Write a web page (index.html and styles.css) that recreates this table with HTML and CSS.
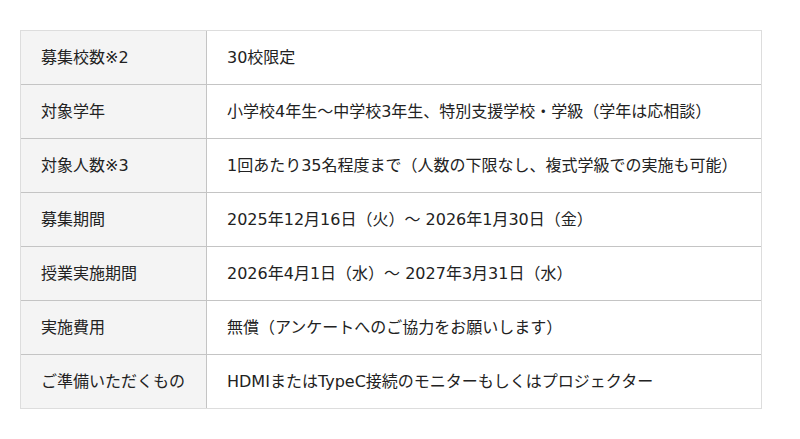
FILE: index.html
```html
<!DOCTYPE html>
<html lang="ja">
<head>
<meta charset="utf-8">
<link rel="stylesheet" href="styles.css">
</head>
<body>
<div class="spec">
  <div class="row"><div class="label">募集校数※2</div><div class="value">30校限定</div></div>
  <div class="row"><div class="label">対象学年</div><div class="value">小学校4年生〜中学校3年生、特別支援学校・学級（学年は応相談）</div></div>
  <div class="row"><div class="label">対象人数※3</div><div class="value">1回あたり35名程度まで（人数の下限なし、複式学級での実施も可能）</div></div>
  <div class="row"><div class="label">募集期間</div><div class="value">2025年12月16日（火）〜 2026年1月30日（金）</div></div>
  <div class="row"><div class="label">授業実施期間</div><div class="value">2026年4月1日（水）〜 2027年3月31日（水）</div></div>
  <div class="row"><div class="label">実施費用</div><div class="value">無償（アンケートへのご協力をお願いします）</div></div>
  <div class="row"><div class="label">ご準備いただくもの</div><div class="value">HDMIまたはTypeC接続のモニターもしくはプロジェクター</div></div>
</div>
</body>
</html>
```
FILE: styles.css
```css
html, body {
  margin: 0;
  padding: 0;
  background: #ffffff;
}
body {
  font-family: "DejaVu Sans", "Noto Sans CJK JP", sans-serif;
  font-size: 16px;
  color: #222222;
  padding: 30px 0 0 20px;
}
.spec {
  width: 742px;
  box-sizing: border-box;
  border: 1px solid #dddddd;
}
.row {
  display: flex;
  height: 53px;
}
.row + .row {
  border-top: 1px solid #c4c4c4;
}
.label {
  width: 185px;
  flex: none;
  background: #f4f4f4;
  border-right: 1px solid #c4c4c4;
  padding-left: 20px;
  box-sizing: border-box;
  width: 186px;
  display: flex;
  align-items: center;
  line-height: 24px;
}
.value {
  flex: 1;
  padding-left: 20px;
  display: flex;
  align-items: center;
  line-height: 24px;
}
```
